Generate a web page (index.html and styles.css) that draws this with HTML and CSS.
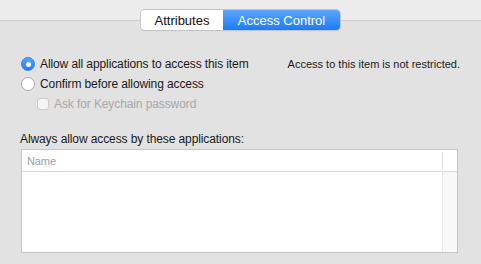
FILE: index.html
```html
<!DOCTYPE html>
<html lang="en">
<head>
    <meta charset="UTF-8">
    <title>Access Control</title>
    <link rel="stylesheet" href="styles.css">
</head>
<body>
    <div class="toolbar">
        <div class="segmented">
            <span class="segment">Attributes</span>
            <span class="segment active">Access Control</span>
        </div>
    </div>
    <div class="panel">
        <div class="options">
            <div class="choices">
                <div class="option">
                    <span class="radio checked"></span>
                    <span>Allow all applications to access this item</span>
                </div>
                <div class="option">
                    <span class="radio"></span>
                    <span>Confirm before allowing access</span>
                </div>
                <div class="option sub disabled">
                    <span class="checkbox"></span>
                    <span>Ask for Keychain password</span>
                </div>
            </div>
            <p class="status">Access to this item is not restricted.</p>
        </div>

        <p class="list-title">Always allow access by these applications:</p>
        <div class="table">
            <div class="table-head">
                <span class="col-name">Name</span>
                <span class="col-extra"></span>
            </div>
            <div class="table-body">
                <span class="col-name"></span>
                <span class="col-extra"></span>
            </div>
        </div>
    </div>
</body>
</html>
```

FILE: styles.css
```css
  body {
      font-family: 'Liberation Sans', Arial, sans-serif;
      font-size: 12px;
      letter-spacing: -0.1px;
      color: #1a1a1a;
      background-color: #e2e2e2;
      margin: 0;
      padding: 0;
      width: 481px;
      height: 264px;
      overflow: hidden;
  }
  .toolbar {
      height: 20px;
      background-color: #ececec;
      border-bottom: 1px solid #cfcfcf;
      display: flex;
      justify-content: center;
  }
  .segmented {
      display: flex;
      margin-top: 10px;
      height: 20px;
      box-sizing: border-box;
      border-radius: 4px;
      box-shadow: 0 0 0 1px #c4c4c4, 0 1px 1px rgba(0, 0, 0, 0.15);
      overflow: hidden;
      position: relative;
      z-index: 1;
      font-size: 13px;
      letter-spacing: 0;
  }
  .segment {
      display: flex;
      align-items: center;
      justify-content: center;
      background: #ffffff;
      color: #111;
      width: 82px;
  }
  .segment.active {
      width: 117px;
      color: #ffffff;
      background: linear-gradient(#5aa6fb, #1b7cf6);
  }
  .panel {
      padding: 0 21px;
  }
  .options {
      display: flex;
      justify-content: space-between;
      margin-top: 35px;
  }
  .choices {
      display: flex;
      flex-direction: column;
      gap: 4px;
  }
  .option {
      display: flex;
      align-items: center;
      gap: 5px;
      height: 16px;
  }
  .option.sub {
      margin-left: 16px;
  }
  .option.disabled {
      color: #a8a8a8;
  }
  .radio {
      width: 14px;
      height: 14px;
      box-sizing: border-box;
      border-radius: 50%;
      background: #ffffff;
      border: 1px solid #a9a9a9;
      display: flex;
      align-items: center;
      justify-content: center;
  }
  .radio.checked {
      background: linear-gradient(#5ba7fb, #1c7cf5);
      border-color: #2d83ef;
  }
  .radio.checked::after {
      content: "";
      width: 5px;
      height: 5px;
      border-radius: 50%;
      background: #ffffff;
  }
  .checkbox {
      width: 12px;
      height: 12px;
      box-sizing: border-box;
      border-radius: 3px;
      border: 1px solid #cccccc;
      background: #f4f4f4;
  }
  .status {
      margin: 2px 0 0;
      font-size: 11px;
      letter-spacing: 0;
      color: #1a1a1a;
  }
  .list-title {
      margin: 20px 0 3px -1px;
  }
  .table {
      border: 1px solid #c6c6c6;
      background: #ffffff;
      width: 437px;
      height: 104px;
      box-sizing: border-box;
      display: flex;
      flex-direction: column;
  }
  .table-head {
      display: flex;
      height: 21px;
      border-bottom: 1px solid #d9d9d9;
      align-items: stretch;
  }
  .table-head .col-name {
      flex: 1;
      color: #a0a0a0;
      padding-left: 5px;
      display: flex;
      align-items: center;
      font-size: 11px;
  }
  .table-head .col-extra {
      width: 14px;
      border-left: 1px solid #dcdcdc;
      margin: 2px 0;
  }
  .table-body {
      flex: 1;
      display: flex;
  }
  .table-body .col-name {
      flex: 1;
  }
  .table-body .col-extra {
      width: 14px;
      background: #f8f8f8;
      border-left: 1px solid #e6e6e6;
  }
```
